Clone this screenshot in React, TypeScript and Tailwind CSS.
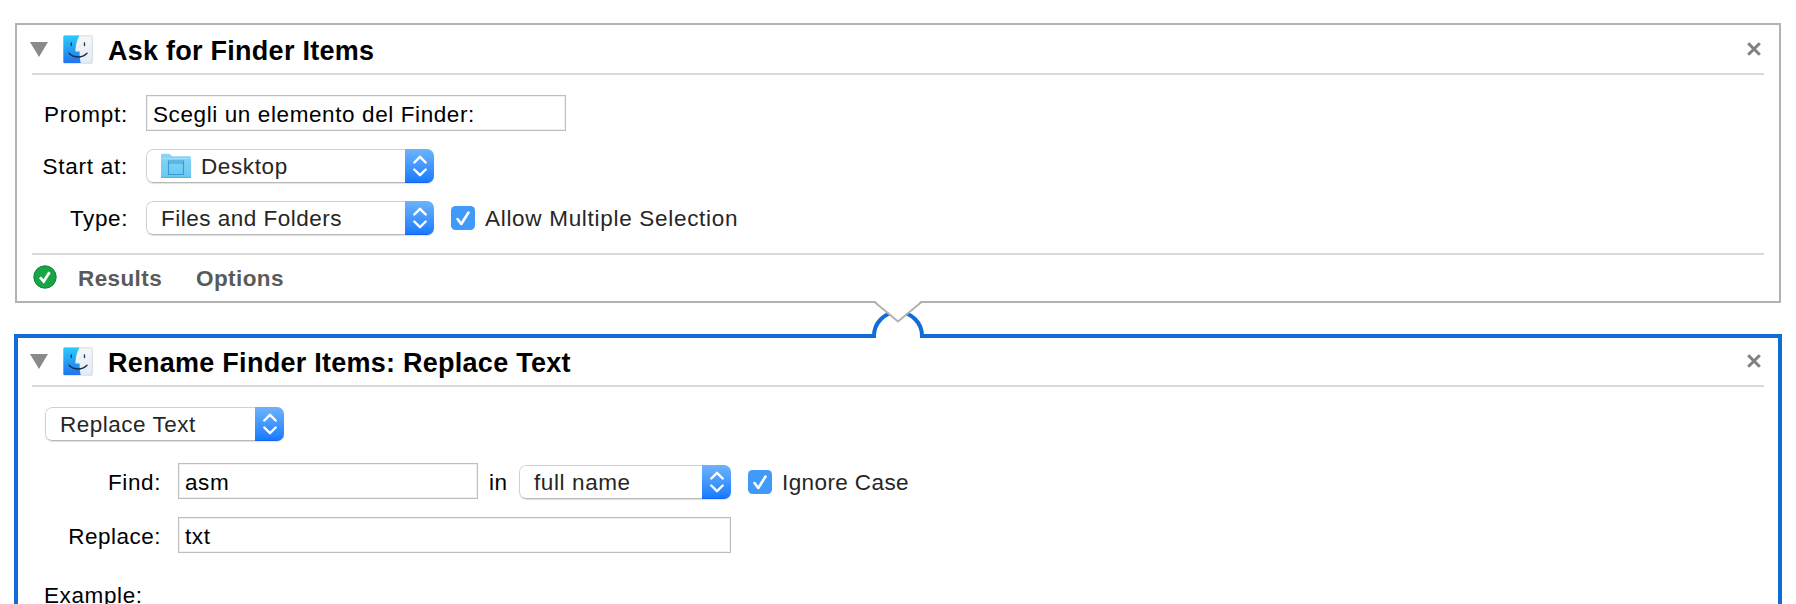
import React from "react";

function FinderIcon() {
  return (
    <svg width="30" height="29" viewBox="0 0 30 29" className="block shrink-0">
      <defs>
        <linearGradient id="faceBlue" x1="0" y1="0" x2="0" y2="1">
          <stop offset="0" stopColor="#27cdfb" />
          <stop offset="1" stopColor="#2372ee" />
        </linearGradient>
        <linearGradient id="faceWhite" x1="0" y1="0" x2="0" y2="1">
          <stop offset="0" stopColor="#f6f7f9" />
          <stop offset="1" stopColor="#e2ecf5" />
        </linearGradient>
      </defs>
      <rect x="0.7" y="0.8" width="28.6" height="27.4" rx="0.8" fill="url(#faceWhite)" stroke="#cdd3da" strokeWidth="0.8" />
      <path d="M0.4 1.2Q0.4 0.5 1.2 0.5H16.5C14 5 12.8 9.500 12.400 16.500H16.600C16.600 20.500 16.900 24.500 17.700 28H1.200Q0.400 28 0.400 27.200Z" fill="url(#faceBlue)" />
      <path d="M8.300 8V10.500M21.500 8V10.500" stroke="#1b3550" strokeWidth="1.300" strokeLinecap="round" fill="none" />
      <path d="M6 18.300C11 23.300 19 23.300 24 18.300" stroke="#1c2e45" strokeWidth="1.400" strokeLinecap="round" fill="none" />
    </svg>
  );
}

function FolderIcon() {
  return (
    <svg width="32" height="27" viewBox="0 0 32 27" className="ml-[13px] mr-[9px] block shrink-0">
      <defs>
        <linearGradient id="folder" x1="0" y1="0" x2="0" y2="1">
          <stop offset="0" stopColor="#86d6f7" />
          <stop offset="1" stopColor="#69c8f3" />
        </linearGradient>
      </defs>
      <path d="M1 2Q1 0.700 2.500 0.700H9.500L12 3.200H29.500Q31 3.200 31 4.700V23.500Q31 24.700 29.800 24.700H2.200Q1 24.700 1 23.500Z" fill="url(#folder)" />
      <path d="M1 5.500H31" stroke="#a0e0fa" strokeWidth="1" />
      <path d="M1 24.400H31" stroke="#52a9d1" strokeWidth="1" />
      <path d="M8.500 8H23.500V21.500H8.500ZM8.500 10H23.500" fill="none" stroke="#379dd0" strokeWidth="1.100" />
    </svg>
  );
}

function Header({ title, size }: { title: string; size: string }) {
  return (
    <div className={"flex shrink-0 items-center border-b-2 border-[#d9d9d9] " + size}>
      <svg width="18" height="15" viewBox="0 0 18 15" className="-ml-[2px] block shrink-0">
        <path d="M0 0H18L9 15Z" fill="#8a8a8a" />
      </svg>
      <div className="ml-[15px]"><FinderIcon /></div>
      <h2 className="ml-[15px] grow whitespace-nowrap pt-[3px] text-[27px] leading-[30px] font-bold tracking-[0.26px] text-black">{title}</h2>
      <svg width="14" height="14" viewBox="0 0 14 14" className="mr-[3px] block shrink-0">
        <path d="M1.200 1.200L12.800 12.800M12.800 1.200L1.200 12.800" stroke="#808080" strokeWidth="3" />
      </svg>
    </div>
  );
}

function Popup({ children, width }: { children: React.ReactNode; width: string }) {
  return (
    <div className={"flex h-[34px] shrink-0 overflow-hidden rounded-[7px] shadow-[0_1px_1px_rgba(0,0,0,0.12)] " + width}>
      <div className="flex grow items-center rounded-l-[7px] border border-r-0 border-[#d2d2d2] border-b-[#b8b8b8] pt-px text-[#262626]">{children}</div>
      <div className="flex w-[29px] shrink-0 items-center justify-center border-b border-[#1464f6] bg-linear-to-b from-[#6cb3fa] to-[#147bff]">
        <svg width="14" height="22" viewBox="0 0 14 22" className="block">
          <path d="M1.300 7.500L7 1.800L12.700 7.500M1.300 14.500L7 20.200L12.700 14.500" fill="none" stroke="#fff" strokeWidth="2.400" strokeLinecap="round" strokeLinejoin="round" />
        </svg>
      </div>
    </div>
  );
}

function Field({ value, width }: { value: string; width: string }) {
  return (
    <div className={"flex h-[36px] shrink-0 items-center border border-[#bdbdbd] bg-white pl-[6px] pt-[3px] shadow-[inset_0_0_0_1px_#f1f1f1] " + width}>
      {value}
    </div>
  );
}

function Check({ label }: { label: string }) {
  return (
    <div className="flex items-center text-[#262626]">
      <span className="block h-[24px] w-[24px] rounded-[4.500px] bg-[#409af9]">
        <svg width="24" height="24" viewBox="0 0 24 24" className="block">
          <path d="M6.500 13L10.300 18L17.500 6.500" fill="none" stroke="#fff" strokeWidth="2.600" strokeLinecap="round" strokeLinejoin="round" />
        </svg>
      </span>
      <span className="ml-[10px] pt-px">{label}</span>
    </div>
  );
}

export default function App() {
  return (
    <main className="relative h-[604px] w-[1796px] overflow-hidden whitespace-nowrap bg-white pt-[23px] font-['Liberation_Sans',Arial,sans-serif] text-[22.5px] leading-[26px] tracking-[0.6px] text-black">
      <section className="ml-[15px] flex h-[280px] w-[1766px] flex-col border-2 border-[#b2b2b2] px-[15px]">
        <Header title="Ask for Finder Items" size="h-[50px]" />
        <div className="mt-[20px] flex h-[36px] items-center">
          <span className="w-[96px] pt-[3px] text-right tracking-[0.75px]">Prompt:</span>
          <span className="ml-[18px]"><Field value="Scegli un elemento del Finder:" width="w-[420px]" /></span>
        </div>
        <div className="mt-[18px] flex h-[34px] items-center">
          <span className="w-[96px] pt-px text-right tracking-[0.75px]">Start at:</span>
          <span className="ml-[18px]"><Popup width="w-[288px]"><FolderIcon />Desktop</Popup></span>
        </div>
        <div className="mt-[18px] flex h-[34px] items-center">
          <span className="w-[96px] pt-px text-right">Type:</span>
          <span className="mr-[17px] ml-[18px]"><Popup width="w-[288px]"><span className="pl-[14px] tracking-[0.5px]">Files and Folders</span></Popup></span>
          <span className="tracking-[0.7px]"><Check label="Allow Multiple Selection" /></span>
        </div>
        <div className="mt-[18px] flex grow items-center border-t-2 border-[#d9d9d9] font-bold tracking-[0.4px] text-[#5a5a5a]">
          <svg width="24" height="24" viewBox="0 0 24 24" className="-mt-[2px] ml-[1px] block">
            <circle cx="12" cy="12" r="11.200" fill="#18a547" stroke="#128337" strokeWidth="1" />
            <path d="M7 12.300L10.700 16.500L16.500 7.200" fill="none" stroke="#fff" strokeWidth="2.700" />
          </svg>
          <span className="ml-[21px] pt-px">Results</span>
          <span className="ml-[34px] pt-px">Options</span>
        </div>
      </section>

      <section className="mt-[31px] ml-[14px] flex h-[340px] w-[1768px] flex-col border-4 border-[#116dd6] px-[14px]">
        <Header title="Rename Finder Items: Replace Text" size="h-[49px] pb-px" />
        <div className="mt-[20px] ml-[13px] flex h-[34px] shrink-0">
          <Popup width="w-[239px]"><span className="pl-[14px] tracking-[0.5px]">Replace Text</span></Popup>
        </div>
        <div className="mt-[22px] flex h-[36px] shrink-0 items-center">
          <span className="w-[129px] pt-[3px] text-right">Find:</span>
          <span className="ml-[17px]"><Field value="asm" width="w-[300px]" /></span>
          <span className="ml-[11px] w-[30px] pt-[3px]">in</span>
          <span className="mr-[17px] pt-[2px]"><Popup width="w-[212px]"><span className="pl-[14px]">full name</span></Popup></span>
          <span className="pt-[2px] tracking-[0.4px]"><Check label="Ignore Case" /></span>
        </div>
        <div className="mt-[18px] flex h-[36px] shrink-0 items-center">
          <span className="w-[129px] pt-[3px] text-right tracking-[0.5px]">Replace:</span>
          <span className="ml-[17px]"><Field value="txt" width="w-[553px]" /></span>
        </div>
        <div className="mt-[30px] ml-[12px] shrink-0">Example:</div>
      </section>

      <svg width="56" height="40" viewBox="870 300 56 40" className="absolute top-[300px] left-[870px] block">
        <path d="M876 333H920V340H876Z" fill="#fff" />
        <path d="M874 338V336A24 24 0 0 1 922 336V338" fill="none" stroke="#116dd6" strokeWidth="4" />
        <path d="M874 300L898 321L922 300Z" fill="#fff" />
        <path d="M870 302H874.500L898 321.500L921.500 302H926" fill="none" stroke="#b2b2b2" strokeWidth="2" />
      </svg>
    </main>
  );
}
